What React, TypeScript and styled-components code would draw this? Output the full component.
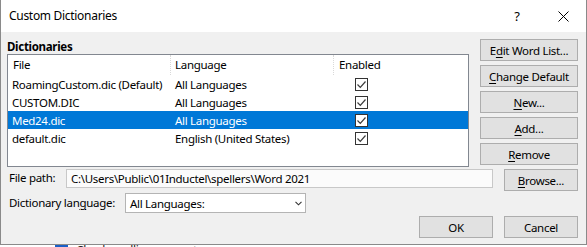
import React from 'react';
import styled, { createGlobalStyle } from 'styled-components';

const GlobalStyle = createGlobalStyle`
    html, body {
        margin: 0;
        padding: 0;
        background: #ffffff;
    }
    body {
        font-family: "Noto Sans", "Open Sans", sans-serif;
        font-size: 11.5px;
        letter-spacing: -0.3px;
        color: #000;
    }
`;

type Dict = { file: string; language: string; enabled: boolean };

const dictionaries: Dict[] = [
    { file: 'RoamingCustom.dic (Default)', language: 'All Languages', enabled: true },
    { file: 'CUSTOM.DIC', language: 'All Languages', enabled: true },
    { file: 'Med24.dic', language: 'All Languages', enabled: true },
    { file: 'default.dic', language: 'English (United States)', enabled: true },
];

const SELECTED = 2;

const App: React.FC = () => {
    return (
        <Screen>
            <GlobalStyle />
            <Dialog>
                <TitleBar>
                    <Title>Custom Dictionaries</Title>
                    <TitleButtons>
                        <TitleButton>?</TitleButton>
                        <TitleButton>
                            <svg width="11" height="11" viewBox="0 0 11 11">
                                <path d="M0.5 0.5 L10.5 10.5 M10.5 0.5 L0.5 10.5" stroke="#000" strokeWidth="1" />
                            </svg>
                        </TitleButton>
                    </TitleButtons>
                </TitleBar>

                <Body>
                    <TopSection>
                        <ListColumn>
                            <GroupLabel>Dictionaries</GroupLabel>
                            <ListBox>
                                <HeaderRow>
                                    <HeaderCell>File</HeaderCell>
                                    <HeaderCell>Language</HeaderCell>
                                    <HeaderCell>Enabled</HeaderCell>
                                </HeaderRow>
                                {dictionaries.map((d, i) => (
                                    <Row key={d.file} $selected={i === SELECTED}>
                                        <Cell>{d.file}</Cell>
                                        <Cell>{d.language}</Cell>
                                        <CheckCell>
                                            <CheckBox>
                                                {d.enabled && (
                                                    <svg width="11" height="11" viewBox="0 0 11 11">
                                                        <path
                                                            d="M1.5 5.5 L4.3 8.3 L9.5 2.5"
                                                            fill="none"
                                                            stroke="#3c3c3c"
                                                            strokeWidth="1.2"
                                                        />
                                                    </svg>
                                                )}
                                            </CheckBox>
                                        </CheckCell>
                                    </Row>
                                ))}
                            </ListBox>
                        </ListColumn>

                        <ButtonColumn>
                            <Button>
                                E<u>d</u>it Word List...
                            </Button>
                            <Button>
                                <u>C</u>hange Default
                            </Button>
                            <Button>
                                <u>N</u>ew...
                            </Button>
                            <Button>
                                <u>A</u>dd...
                            </Button>
                            <Button>
                                <u>R</u>emove
                            </Button>
                        </ButtonColumn>
                    </TopSection>

                    <PathRow>
                        <FieldLabel $width={59}>File path:</FieldLabel>
                        <PathBox>C:\Users\Public\01Inductel\spellers\Word 2021</PathBox>
                        <Button $width={74}>
                            <u>B</u>rowse...
                        </Button>
                    </PathRow>

                    <LanguageRow>
                        <FieldLabel $width={118}>
                            Dictionary lan<u>g</u>uage:
                        </FieldLabel>
                        <Select>
                            <span>All Languages:</span>
                            <svg width="7" height="5" viewBox="0 0 7 5">
                                <path d="M0.5 0.8 L3.5 3.8 L6.5 0.8" fill="none" stroke="#333" strokeWidth="1.1" />
                            </svg>
                        </Select>
                    </LanguageRow>

                    <Footer>
                        <Button $width={74}>OK</Button>
                        <Button $width={74}>Cancel</Button>
                    </Footer>
                </Body>
            </Dialog>

            <BehindRow>
                <BehindCheck />
                <span>Check spelling as you type</span>
            </BehindRow>
        </Screen>
    );
};

const Screen = styled.div`
    width: 587px;
    height: 247px;
    overflow: hidden;
    background: #ffffff;
`;

const Dialog = styled.div`
    box-sizing: border-box;
    width: 587px;
    height: 245px;
    border: 1px solid #8a8a8a;
    border-top: none;
    background: #f0f0f0;
    display: flex;
    flex-direction: column;
`;

const TitleBar = styled.div`
    height: 32px;
    flex: none;
    background: #ffffff;
    display: flex;
    align-items: center;
    justify-content: space-between;
    padding-left: 8px;
`;

const Title = styled.div`
    font-size: 12px;
    margin-top: -1px;
`;

const TitleButtons = styled.div`
    display: flex;
    height: 100%;
`;

const TitleButton = styled.div`
    width: 46px;
    height: 100%;
    display: flex;
    align-items: center;
    justify-content: center;
    font-size: 13px;
    svg {
        display: block;
    }
`;

const Body = styled.div`
    flex: 1;
    padding: 7px 8px 0 6px;
    display: flex;
    flex-direction: column;
`;

const TopSection = styled.div`
    display: flex;
    gap: 11px;
`;

const ListColumn = styled.div`
    width: 462px;
    display: flex;
    flex-direction: column;
`;

const GroupLabel = styled.div`
    font-weight: 700;
    height: 15px;
    line-height: 15px;
`;

const ListBox = styled.div`
    box-sizing: border-box;
    height: 113px;
    border: 1px solid #828790;
    background: #ffffff;
`;

const columns = '163px 163px 1fr';

const HeaderRow = styled.div`
    display: grid;
    grid-template-columns: ${columns};
    height: 20px;
`;

const HeaderCell = styled.div`
    line-height: 20px;
    padding-left: 5px;
    border-right: 1px dotted #d9d9d9;
    &:nth-child(2) {
        padding-left: 4px;
    }
    &:last-child {
        border-right: none;
    }
`;

const Row = styled.div<{ $selected?: boolean }>`
    display: grid;
    grid-template-columns: ${columns};
    height: 18px;
    align-items: center;
    background: ${(p) => (p.$selected ? '#0078d7' : 'transparent')};
    color: ${(p) => (p.$selected ? '#ffffff' : '#000000')};
`;

const Cell = styled.div`
    padding-left: 4px;
    white-space: nowrap;
`;

const CheckCell = styled.div`
    padding-left: 21px;
    display: flex;
`;

const CheckBox = styled.div`
    box-sizing: border-box;
    width: 13px;
    height: 13px;
    border: 1px solid #333333;
    background: #ffffff;
    display: flex;
    align-items: center;
    justify-content: center;
    svg {
        display: block;
    }
`;

const ButtonColumn = styled.div`
    width: 98px;
    display: flex;
    flex-direction: column;
    gap: 4px;
`;

const Button = styled.div<{ $width?: number }>`
    box-sizing: border-box;
    width: ${(p) => (p.$width ? `${p.$width}px` : '100%')};
    height: 22px;
    flex: none;
    border: 1px solid #adadad;
    background: #e1e1e1;
    display: flex;
    align-items: center;
    justify-content: center;
    white-space: nowrap;
    u {
        text-decoration-thickness: 1px;
        text-underline-offset: 2px;
    }
`;

const PathRow = styled.div`
    display: flex;
    align-items: flex-start;
    margin-top: 2px;
    height: 22px;
`;

const FieldLabel = styled.div<{ $width: number }>`
    box-sizing: border-box;
    width: ${(p) => p.$width}px;
    flex: none;
    padding-left: 2px;
    white-space: nowrap;
    line-height: 18px;
    u {
        text-underline-offset: 2px;
    }
`;

const PathBox = styled.div`
    box-sizing: border-box;
    margin-right: 11px;
    width: 429px;
    height: 19px;
    border: 1px solid #c8c8c8;
    background: #fbfbfb;
    padding-left: 4px;
    line-height: 17px;
    white-space: nowrap;
`;

const LanguageRow = styled.div`
    display: flex;
    align-items: center;
    margin-top: 2px;
    height: 20px;
`;

const Select = styled.div`
    box-sizing: border-box;
    width: 181px;
    height: 20px;
    border: 1px solid #b4b4b4;
    background: #ffffff;
    display: flex;
    align-items: center;
    justify-content: space-between;
    padding: 0 3px 0 4px;
    svg {
        display: block;
    }
`;

const Footer = styled.div`
    display: flex;
    justify-content: flex-end;
    gap: 11px;
    margin-top: 3px;
`;

const BehindRow = styled.div`
    display: flex;
    align-items: flex-start;
    gap: 8px;
    padding-left: 55px;
    height: 2px;
    line-height: 12px;
    font-size: 12px;
    color: #222;
`;

const BehindCheck = styled.div`
    width: 13px;
    height: 13px;
    background: #1a5fc7;
    flex: none;
`;

export default App;
